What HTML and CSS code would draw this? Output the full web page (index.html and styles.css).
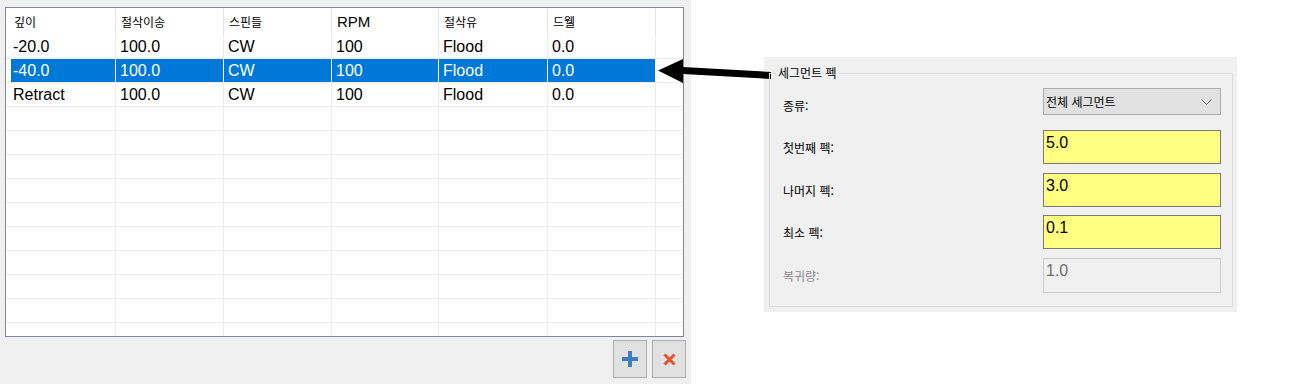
FILE: index.html
```html
<!DOCTYPE html>
<html lang="ko">

<head>
    <meta charset="UTF-8">
    <meta name="viewport" content="width=device-width, initial-scale=1.0">
    <title>Segment Peck</title>
    <link rel="stylesheet" href="styles.css">
</head>

<body>
    <div class="left-pane">
        <div class="grid">
            <div class="grid-head">
                <div class="rh"></div>
                <div class="cell c1">깊이</div>
                <div class="cell c2">절삭이송</div>
                <div class="cell c3">스핀들</div>
                <div class="cell c4 latin">RPM</div>
                <div class="cell c5">절삭유</div>
                <div class="cell c6">드웰</div>
                <div class="cell fill"></div>
            </div>
            <div class="grid-row">
                <div class="rh"></div>
                <div class="cell c1">-20.0</div>
                <div class="cell c2">100.0</div>
                <div class="cell c3">CW</div>
                <div class="cell c4">100</div>
                <div class="cell c5">Flood</div>
                <div class="cell c6">0.0</div>
                <div class="cell fill"></div>
            </div>
            <div class="grid-row selected">
                <div class="rh"></div>
                <div class="cell c1">-40.0</div>
                <div class="cell c2">100.0</div>
                <div class="cell c3">CW</div>
                <div class="cell c4">100</div>
                <div class="cell c5">Flood</div>
                <div class="cell c6">0.0</div>
                <div class="cell fill"></div>
            </div>
            <div class="grid-row">
                <div class="rh"></div>
                <div class="cell c1">Retract</div>
                <div class="cell c2">100.0</div>
                <div class="cell c3">CW</div>
                <div class="cell c4">100</div>
                <div class="cell c5">Flood</div>
                <div class="cell c6">0.0</div>
                <div class="cell fill"></div>
            </div>
            <div class="grid-row"><div class="rh"></div><div class="cell c1"></div><div class="cell c2"></div><div class="cell c3"></div><div class="cell c4"></div><div class="cell c5"></div><div class="cell c6"></div><div class="cell fill"></div></div>
            <div class="grid-row"><div class="rh"></div><div class="cell c1"></div><div class="cell c2"></div><div class="cell c3"></div><div class="cell c4"></div><div class="cell c5"></div><div class="cell c6"></div><div class="cell fill"></div></div>
            <div class="grid-row"><div class="rh"></div><div class="cell c1"></div><div class="cell c2"></div><div class="cell c3"></div><div class="cell c4"></div><div class="cell c5"></div><div class="cell c6"></div><div class="cell fill"></div></div>
            <div class="grid-row"><div class="rh"></div><div class="cell c1"></div><div class="cell c2"></div><div class="cell c3"></div><div class="cell c4"></div><div class="cell c5"></div><div class="cell c6"></div><div class="cell fill"></div></div>
            <div class="grid-row"><div class="rh"></div><div class="cell c1"></div><div class="cell c2"></div><div class="cell c3"></div><div class="cell c4"></div><div class="cell c5"></div><div class="cell c6"></div><div class="cell fill"></div></div>
            <div class="grid-row"><div class="rh"></div><div class="cell c1"></div><div class="cell c2"></div><div class="cell c3"></div><div class="cell c4"></div><div class="cell c5"></div><div class="cell c6"></div><div class="cell fill"></div></div>
            <div class="grid-row"><div class="rh"></div><div class="cell c1"></div><div class="cell c2"></div><div class="cell c3"></div><div class="cell c4"></div><div class="cell c5"></div><div class="cell c6"></div><div class="cell fill"></div></div>
            <div class="grid-row"><div class="rh"></div><div class="cell c1"></div><div class="cell c2"></div><div class="cell c3"></div><div class="cell c4"></div><div class="cell c5"></div><div class="cell c6"></div><div class="cell fill"></div></div>
            <div class="grid-row"><div class="rh"></div><div class="cell c1"></div><div class="cell c2"></div><div class="cell c3"></div><div class="cell c4"></div><div class="cell c5"></div><div class="cell c6"></div><div class="cell fill"></div></div>
            <div class="grid-row"><div class="rh"></div><div class="cell c1"></div><div class="cell c2"></div><div class="cell c3"></div><div class="cell c4"></div><div class="cell c5"></div><div class="cell c6"></div><div class="cell fill"></div></div>
        </div>

        <div class="grid-buttons">
            <button class="tool-btn" title="추가">
                <svg width="16" height="16" viewBox="0 0 16 16">
                    <rect x="6" y="0" width="4" height="16" fill="#3f7fc2" />
                    <rect x="0" y="6" width="16" height="4" fill="#3f7fc2" />
                </svg>
            </button>
            <button class="tool-btn" title="삭제">
                <svg width="13" height="13" viewBox="0 0 13 13">
                    <path d="M1.5 1.5 L11.5 11.5 M11.5 1.5 L1.5 11.5" stroke="#e2532d" stroke-width="3" />
                </svg>
            </button>
        </div>
    </div>

    <svg class="pointer-arrow" width="125" height="30" viewBox="0 0 125 30">
        <polygon points="8,15.5 33,4 33,12 121,17 121,24 33,19 33,28" fill="#000" />
    </svg>

    <div class="right-pane">
        <div class="group">
            <span class="group-title">세그먼트 펙</span>

            <div class="field">
                <span class="field-label">종류:</span>
                <div class="combo">
                    <span>전체 세그먼트</span>
                    <svg width="11" height="6" viewBox="0 0 11 6">
                        <polyline points="0.5,0.5 5.5,5.5 10.5,0.5" fill="none" stroke="#6a6a6a" stroke-width="1" />
                    </svg>
                </div>
            </div>
            <div class="field">
                <span class="field-label">첫번째 펙:</span>
                <div class="textbox">5.0</div>
            </div>
            <div class="field">
                <span class="field-label">나머지 펙:</span>
                <div class="textbox">3.0</div>
            </div>
            <div class="field">
                <span class="field-label">최소 펙:</span>
                <div class="textbox">0.1</div>
            </div>
            <div class="field disabled">
                <span class="field-label">복귀량:</span>
                <div class="textbox">1.0</div>
            </div>
        </div>
    </div>
</body>

</html>
```

FILE: styles.css
```css
body {
    margin: 0;
    background-color: #fff;
    display: flex;
    align-items: flex-start;
    font-family: "Noto Sans CJK KR", "Liberation Sans", sans-serif;
    font-size: 12px;
    color: #000;
}

.left-pane {
    width: 691px;
    height: 384px;
    box-sizing: border-box;
    padding: 7px 5px 0 5px;
    background-color: #f0f0f0;
}

.grid {
    width: 679px;
    height: 330px;
    box-sizing: border-box;
    border: 1px solid #828790;
    background-color: #fff;
    overflow: hidden;
}

.grid-head,
.grid-row {
    display: flex;
}

.grid-head {
    height: 27px;
}

.grid-row {
    height: 24px;
    box-sizing: border-box;
    border-bottom: 1px solid #ececec;
    font-family: "Liberation Sans", sans-serif;
    font-size: 16px;
}

.rh {
    width: 5px;
    flex: none;
}

.cell {
    flex: none;
    box-sizing: border-box;
    border-right: 1px solid #ececec;
    padding-left: 4px;
    display: flex;
    align-items: center;
    white-space: nowrap;
}

.grid-head .cell {
    border-right-color: #e5e5e5;
    padding-left: 5px;
}

.grid-head .latin {
    font-family: "Liberation Sans", sans-serif;
    font-size: 15px;
}

.c1 { width: 105px; padding-left: 2px; }
.grid-head .c1 { padding-left: 3px; }
.c2 { width: 108px; }
.c3 { width: 108px; }
.c4 { width: 107px; }
.c5 { width: 109px; }
.c6 { width: 108px; }

.cell.fill {
    flex: 1;
    border-right: none;
}

.grid-row.selected .cell {
    background-color: #0078d7;
    color: #fff;
    border-right-color: #fff;
}

.grid-row.selected .cell.fill {
    background-color: #fff;
}

.grid-buttons {
    display: flex;
    justify-content: flex-end;
    gap: 5px;
    margin-top: 3px;
}

.tool-btn {
    width: 34px;
    height: 38px;
    padding: 0;
    border: 1px solid #adadad;
    background-color: #e1e1e1;
    display: flex;
    align-items: center;
    justify-content: center;
}

.pointer-arrow {
    position: absolute;
    left: 650px;
    top: 55px;
}

.right-pane {
    width: 473px;
    height: 255px;
    margin-left: 73px;
    margin-top: 57px;
    box-sizing: border-box;
    padding: 16px 4px 5px 5px;
    background-color: #f0f0f0;
}

.group {
    position: relative;
    height: 100%;
    box-sizing: border-box;
    border: 1px solid #dcdcdc;
    padding: 14px 11px 0 13px;
}

.group-title {
    position: absolute;
    left: 6px;
    top: -9px;
    padding: 0 2px;
    line-height: 16px;
    background-color: #f0f0f0;
}

.field {
    display: flex;
    justify-content: space-between;
    align-items: flex-start;
    margin-bottom: 8px;
}

.field:first-of-type {
    margin-bottom: 15px;
}

.field:nth-of-type(2) {
    margin-bottom: 9px;
}

.field:nth-of-type(4) {
    margin-bottom: 9px;
}

.field-label {
    padding-top: 10px;
    line-height: 16px;
}

.combo {
    width: 178px;
    height: 27px;
    box-sizing: border-box;
    border: 1px solid #adadad;
    background-color: #e1e1e1;
    display: flex;
    align-items: center;
    justify-content: space-between;
    padding: 0 8px 0 2px;
}

.textbox {
    width: 178px;
    height: 34px;
    box-sizing: border-box;
    border: 1px solid #7a7a7a;
    background-color: #ffff80;
    padding: 3px 2px 0 2px;
    font-family: "Liberation Sans", sans-serif;
    font-size: 16px;
    line-height: 18px;
}

.field.disabled .field-label {
    color: #8d8d8d;
}

.field.disabled .textbox {
    height: 35px;
    border-color: #cccccc;
    background-color: #f0f0f0;
    color: #6d6d6d;
}
```
